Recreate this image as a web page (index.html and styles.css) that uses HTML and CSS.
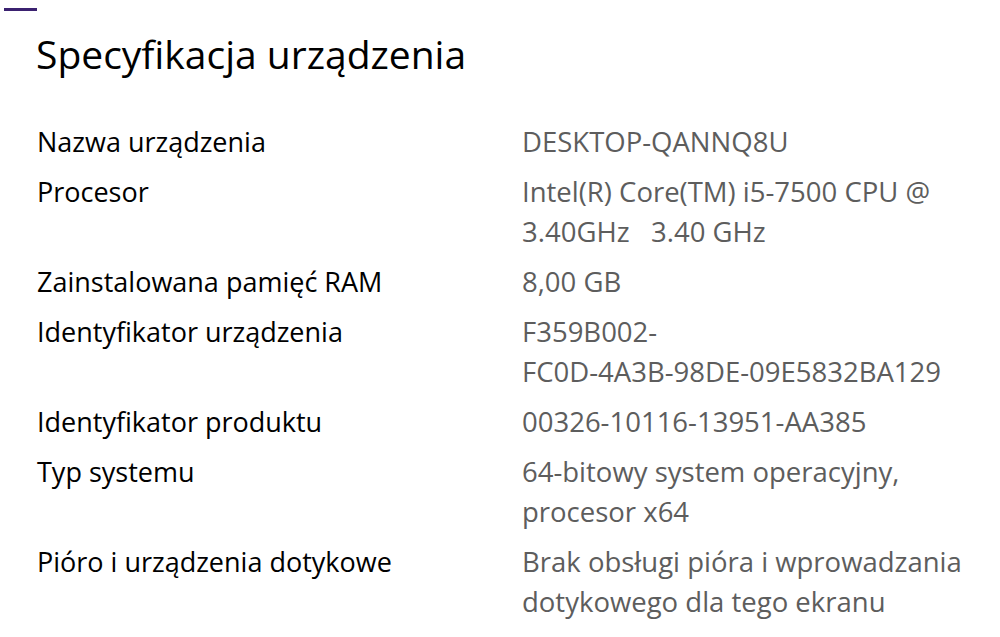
FILE: index.html
```html
<!DOCTYPE html>
<html lang="pl">
<head>
<meta charset="utf-8">
<link rel="stylesheet" href="styles.css">
</head>
<body>
<div class="accent"></div>
<h1 class="title">Specyfikacja urządzenia</h1>
<dl class="specs">
  <dt>Nazwa urządzenia</dt>
  <dd>DESKTOP-QANNQ8U</dd>
  <dt>Procesor</dt>
  <dd>Intel(R) Core(TM) i5-7500 CPU @<br>3.40GHz&nbsp;&nbsp;&nbsp;3.40 GHz</dd>
  <dt>Zainstalowana pamięć RAM</dt>
  <dd>8,00 GB</dd>
  <dt>Identyfikator urządzenia</dt>
  <dd>F359B002-<br>FC0D-4A3B-98DE-09E5832BA129</dd>
  <dt>Identyfikator produktu</dt>
  <dd>00326-10116-13951-AA385</dd>
  <dt>Typ systemu</dt>
  <dd>64-bitowy system operacyjny,<br>procesor x64</dd>
  <dt>Pióro i urządzenia dotykowe</dt>
  <dd>Brak obsługi pióra i wprowadzania<br>dotykowego dla tego ekranu</dd>
</dl>
</body>
</html>
```

FILE: styles.css
```css
html, body {
  margin: 0;
  padding: 0;
  background: #ffffff;
}
body {
  width: 1000px;
  height: 637px;
  overflow: hidden;
  font-family: "Open Sans", "Noto Sans", sans-serif;
}
.accent {
  width: 33px;
  height: 3px;
  background: #3b2170;
  margin: 8px 0 0 4px;
}
.title {
  margin: 15px 0 0 36px;
  font-weight: 400;
  font-size: 39px;
  line-height: 56px;
  color: #000;
}
.specs {
  display: grid;
  grid-template-columns: 485px 1fr;
  row-gap: 10px;
  margin: 40px 0 0 37px;
  font-size: 27px;
  line-height: 40px;
}
.specs dt {
  margin: 0;
  color: #000;
}
.specs dd {
  margin: 0;
  font-size: 27.5px;
  color: #5d5d5d;
}
```
